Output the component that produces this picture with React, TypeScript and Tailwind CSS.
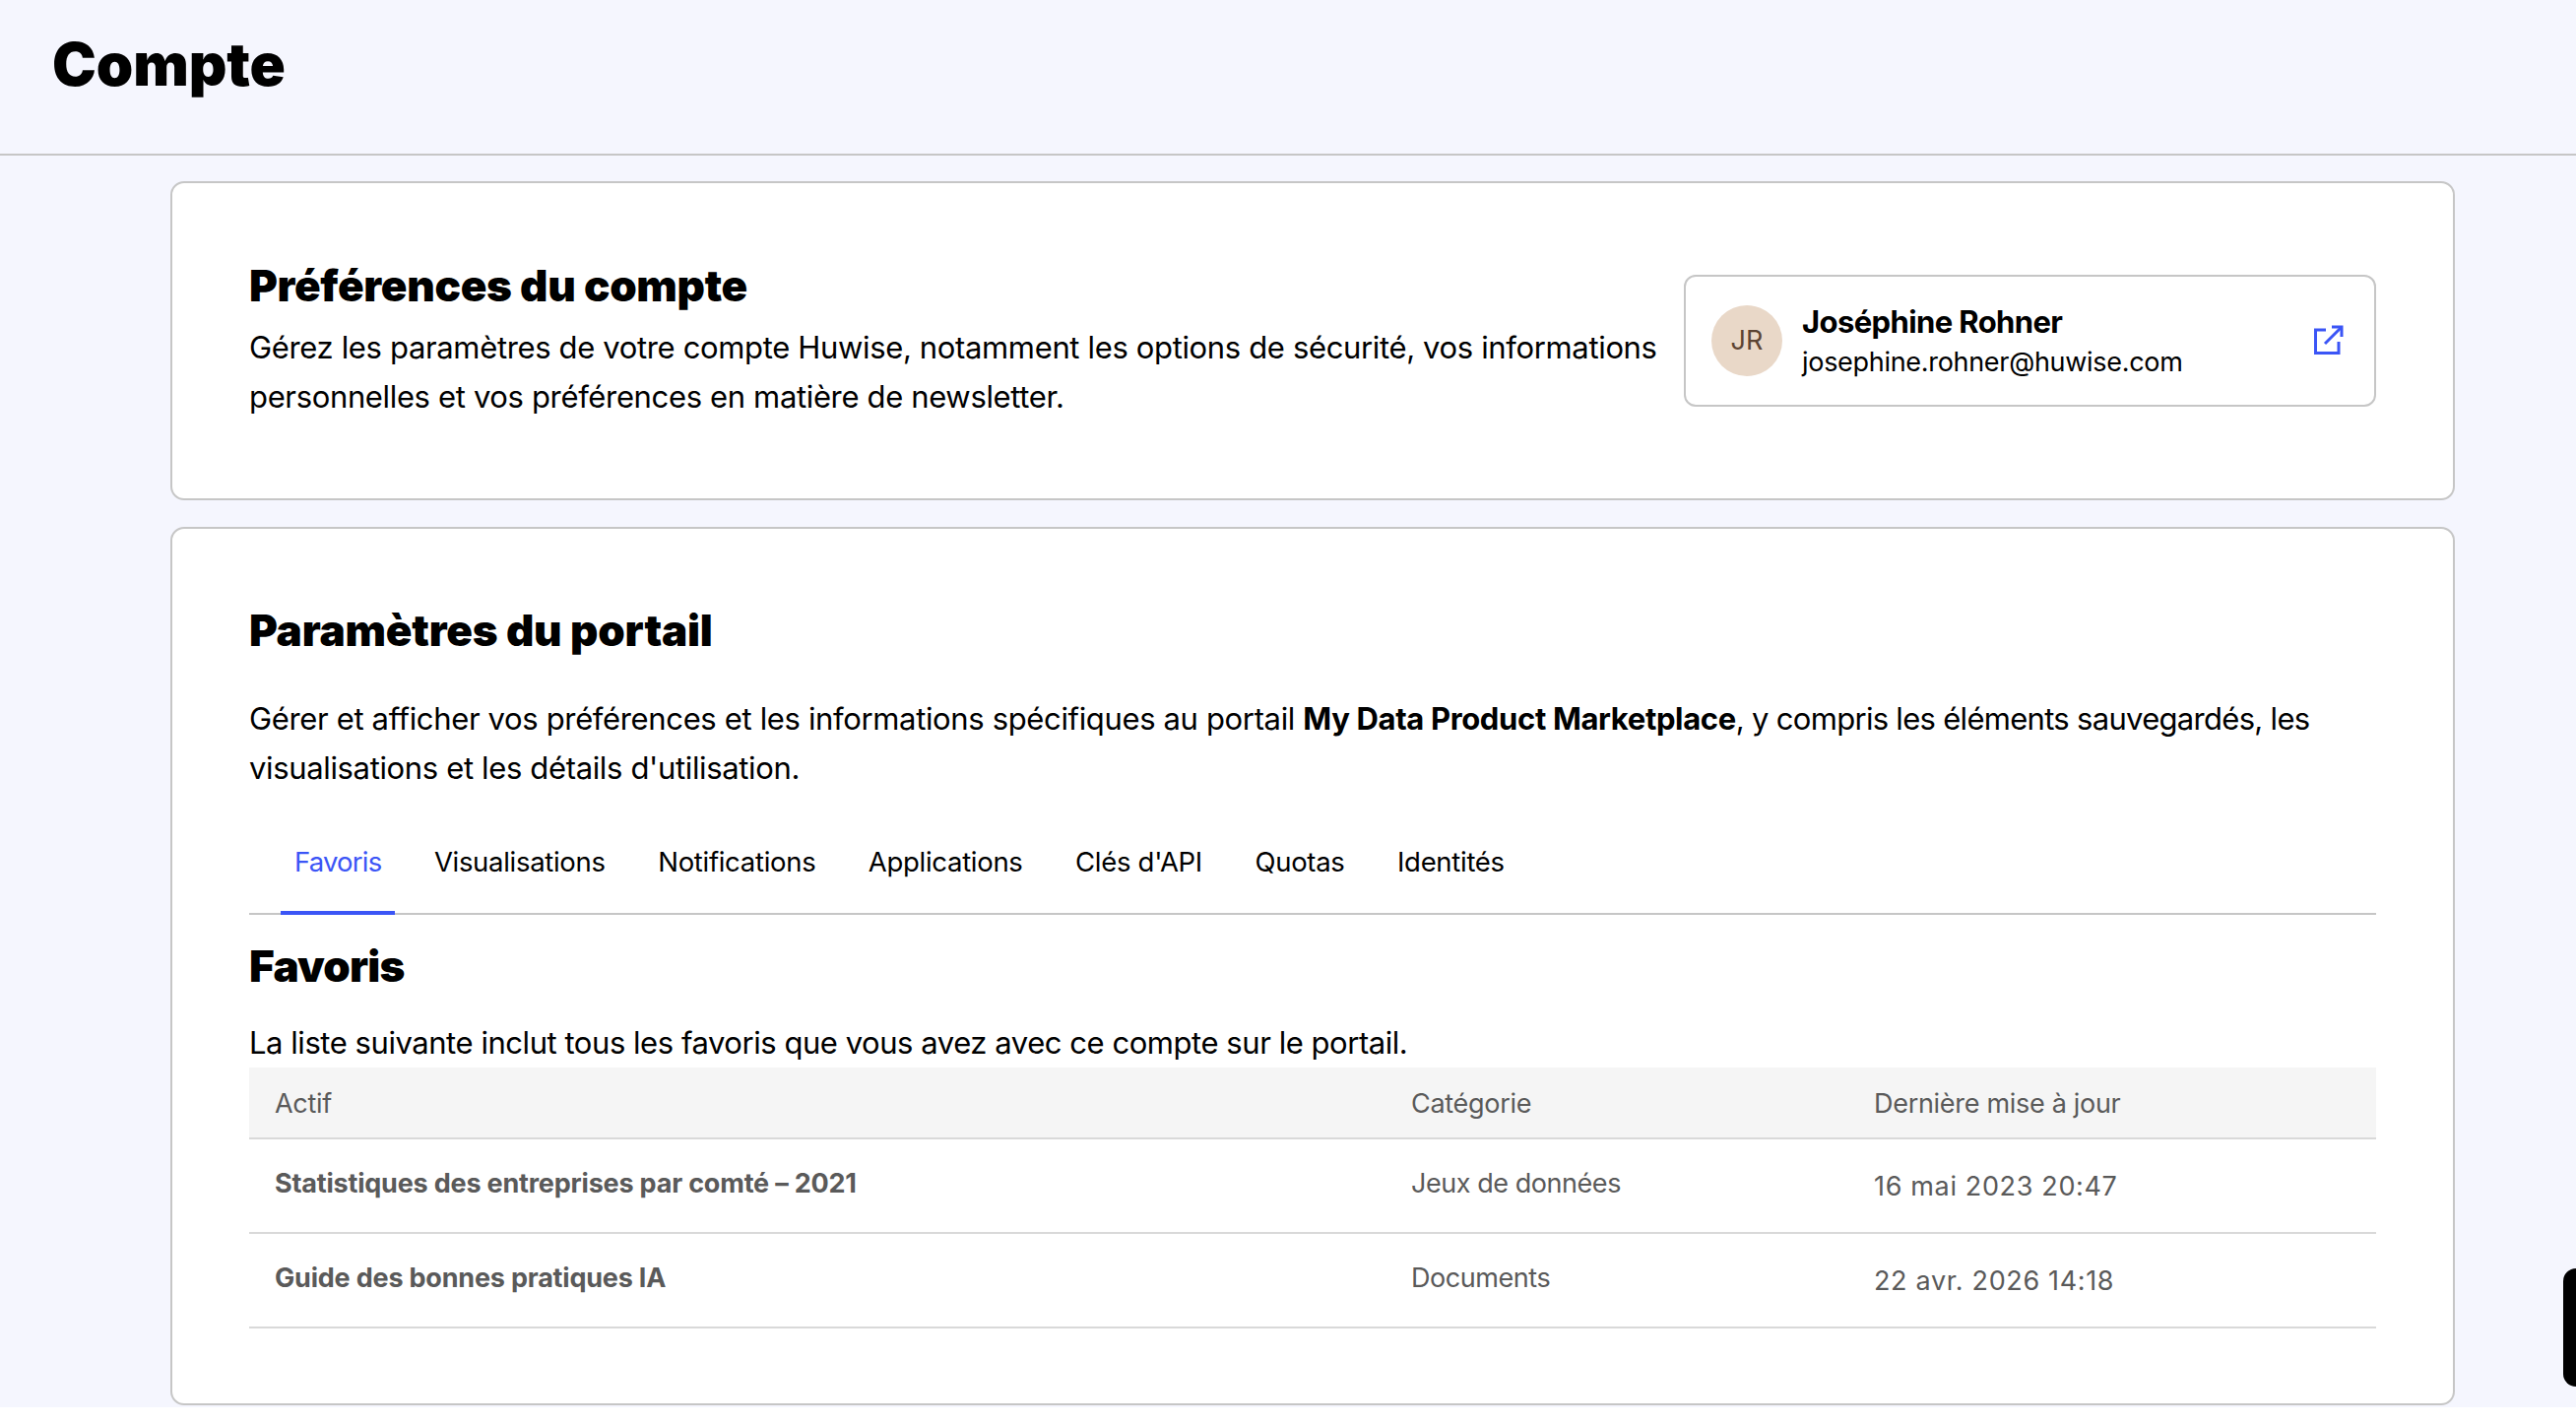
const bodyFont = "font-['Inter',sans-serif]";

const tabs = ["Favoris", "Visualisations", "Notifications", "Applications", "Clés d'API", "Quotas", "Identités"];

const favorites = [
  { name: "Statistiques des entreprises par comté – 2021", category: "Jeux de données", updated: "16 mai 2023 20:47" },
  { name: "Guide des bonnes pratiques IA", category: "Documents", updated: "22 avr. 2026 14:18" },
];

const ExternalLinkIcon = () => (
  <svg className="-mt-[3px]" width="30" height="30" viewBox="0 0 30 30" fill="none" stroke="#3b55f6" strokeWidth="3">
    <path d="M12 5H1.5v23.5H25V17" />
    <path d="M11 19 27.5 2.5" />
    <path d="M18 2h10v10" />
  </svg>
);

export default function App() {
  return (
    <div className={`relative h-[1446px] overflow-hidden bg-white text-black ${bodyFont}`}>
      <div className="h-[1429px] bg-[#f5f6fe]">
        <header className="flex h-[158px] items-start border-b-2 border-[#c6c6c6] pl-[53px] pt-[27px]">
          <h1 className="text-[60px] leading-[76px] font-black tracking-[-0.1px]">Compte</h1>
        </header>

        <main className="ml-[173px] mr-[123px] flex flex-col gap-[27px] pt-[26px]">
          <section className="flex h-[324px] items-center justify-between rounded-[14px] border-2 border-[#c6c6c6] bg-white px-[78px]">
            <div className="w-[1440px]">
              <h2 className="-mt-[2px] text-[44px] leading-[56px] font-black tracking-[-0.3px]">Préférences du compte</h2>
              <p className="mt-[10px] text-[31px] leading-[50px] tracking-[-0.35px]">
                Gérez les paramètres de votre compte Huwise, notamment les options de sécurité, vos informations personnelles et vos préférences en matière de newsletter.
              </p>
            </div>
            <div className="flex h-[134px] w-[703px] items-center rounded-[12px] border-2 border-[#c6c6c6] pl-[26px] pr-[31px]">
              <div className="flex size-[72px] items-center justify-center rounded-full bg-[#e9d8c8] text-[27px] text-[#5c4433]">JR</div>
              <div className="ml-[20px] flex-1 pt-[2px]">
                <p className="text-[31px] leading-[41px] font-bold tracking-[-0.6px]">Joséphine Rohner</p>
                <p className="text-[27px] leading-[41px] tracking-[-0.3px]">josephine.rohner@huwise.com</p>
              </div>
              <ExternalLinkIcon />
            </div>
          </section>

          <section className="h-[892px] rounded-[14px] border-2 border-[#c6c6c6] bg-white px-[78px] pt-[75px]">
            <h2 className="text-[44px] leading-[56px] font-black tracking-[-0.2px]">Paramètres du portail</h2>
            <p className="mt-[37px] text-[31px] leading-[50px] tracking-[-0.35px]">
              Gérer et afficher vos préférences et les informations spécifiques au portail <strong className="font-bold">My Data Product Marketplace</strong>
              <span className="tracking-[-0.7px]">, y compris les éléments sauvegardés, les</span> visualisations et les détails d'utilisation.
            </p>

            <div className="mt-[23px] flex h-[101px] gap-[25.5px] border-b-2 border-[#c6c6c6] pl-[32px]">
              {tabs.map((tab, index) => (
                <div
                  key={tab}
                  className={
                    index === 0
                      ? "-mb-[2px] flex items-center border-b-4 border-[#3b55f6] px-[14px] pb-[1px] text-[27.5px] text-[#3b55f6] tracking-[-0.8px]"
                      : "flex items-center px-[14px] pb-[3px] text-[27.5px] tracking-[-0.3px]"
                  }
                >
                  {tab}
                </div>
              ))}
            </div>

            <h3 className="mt-[24px] text-[44px] leading-[56px] font-black tracking-[-0.8px]">Favoris</h3>
            <p className="mt-[25px] text-[31px] leading-[49px] tracking-[-0.45px]">
              La liste suivante inclut tous les favoris que vous avez avec ce compte sur le portail.
            </p>

            <div className="mt-[1px] text-[27px] text-[#5a5a5a] tracking-[-0.3px]">
              <div className="grid h-[73px] grid-cols-[1154px_470px_1fr] items-center border-b-2 border-[#d9d9d9] bg-[#f5f5f5] pl-[26px] pt-[3px]">
                <span>Actif</span>
                <span>Catégorie</span>
                <span>Dernière mise à jour</span>
              </div>
              {favorites.map((item) => (
                <div key={item.name} className="grid h-[96px] grid-cols-[1154px_470px_1fr] items-center border-b-2 border-[#d9d9d9] pl-[26px]">
                  <span className="pb-[3px] font-bold tracking-[-0.2px]">{item.name}</span>
                  <span className="pb-[3px] tracking-[-0.45px]">{item.category}</span>
                  <span className="pt-[3px] tracking-[0.65px]">{item.updated}</span>
                </div>
              ))}
            </div>
          </section>
        </main>
      </div>

      {/* widget du bord droit */}
      <div className="absolute right-0 top-[1288px] h-[120px] w-[13px] rounded-l-[24px] bg-black" />
    </div>
  );
}
